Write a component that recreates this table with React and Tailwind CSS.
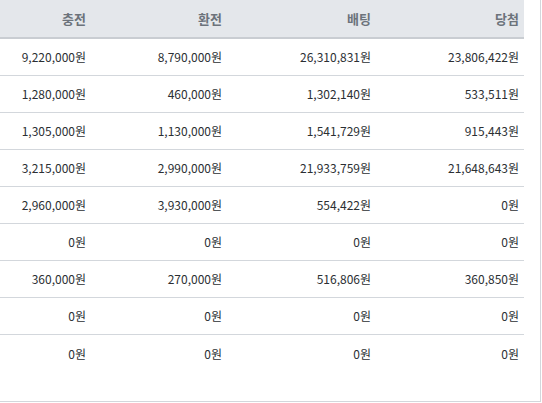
import React from "react";

const rows = [
    ["9,220,000원", "8,790,000원", "26,310,831원", "23,806,422원"],
    ["1,280,000원", "460,000원", "1,302,140원", "533,511원"],
    ["1,305,000원", "1,130,000원", "1,541,729원", "915,443원"],
    ["3,215,000원", "2,990,000원", "21,933,759원", "21,648,643원"],
    ["2,960,000원", "3,930,000원", "554,422원", "0원"],
    ["0원", "0원", "0원", "0원"],
    ["360,000원", "270,000원", "516,806원", "360,850원"],
    ["0원", "0원", "0원", "0원"],
    ["0원", "0원", "0원", "0원"],
];

const headers = ["충전", "환전", "배팅", "당첨"];

function App() {
    return (
        <div className="w-[542px] h-[403px] bg-white overflow-hidden" style={{ fontFamily: '"Noto Sans CJK KR", "Noto Sans", sans-serif' }}>
            <div className="w-[541px] h-[402px] border-r border-b border-[#d3d7dc] bg-white">
                <div className="w-[524px]">
                    {/* header */}
                    <div className="grid grid-cols-[91px_136px_149px_148px] h-[39px] bg-[#e4e7eb] border-b-2 border-[#c9cdd2]">
                        {headers.map((h, i) => (
                            <div key={i} className="flex items-center justify-end pr-[5px] text-[13px] font-bold text-[#6c737b]">
                                {h}
                            </div>
                        ))}
                    </div>
                    {/* rows */}
                    {rows.map((r, idx) => (
                        <div
                            key={idx}
                            className={`grid grid-cols-[91px_136px_149px_148px] h-[37px] ${idx < rows.length - 1 ? 'border-b border-[#d3d7dc]' : ''}`}
                        >
                            {r.map((c, i) => (
                                <div key={i} className="flex items-center justify-end pr-[5px] text-[12px] text-[#2b2f33]">
                                    {c}
                                </div>
                            ))}
                        </div>
                    ))}
                </div>
            </div>
        </div>
    )
}

export default App
